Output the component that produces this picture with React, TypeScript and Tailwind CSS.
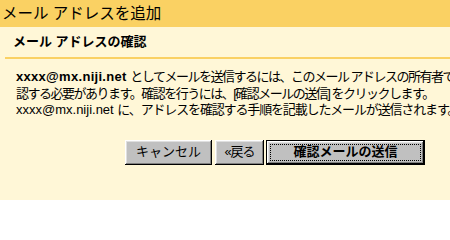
import React from 'react';

const bevel =
  'shadow-[inset_-1px_-1px_#000,inset_1px_1px_#fff,inset_-2px_-2px_#808080,inset_2px_2px_#dfdfdf]';

const App: React.FC = () => {
  return (
    <div className="w-[450px] h-[200px] overflow-hidden bg-[#fff7d7] text-black font-['Liberation_Sans','Noto_Sans_CJK_JP',sans-serif]">
      <div className="h-[27px] bg-[#fad163] pl-[2px] flex items-center text-[15.5px] whitespace-nowrap">
        メール アドレスを追加
      </div>
      <div className="h-[30px] pl-[13px] flex items-center text-[13px] font-bold whitespace-nowrap">
        メール アドレスの確認
      </div>
      <div className="ml-[5px] h-[2px] bg-[#fad163]" />

      <div className="pl-[16px] pt-[10px] text-[13px] leading-[16.5px] whitespace-nowrap">
        <p>
          <b className="tracking-[0.3px]">xxxx@mx.niji.net</b>{' '}
          <span className="tracking-[-1.5px]">としてメールを送信するには、このメール アドレスの所有者であることを確</span>
        </p>
        <p className="tracking-[-1.5px]">
          認する必要があります。確認を行うには、[確認メールの送信] をクリックします。
        </p>
        <p>
          xxxx@mx.niji.net{' '}
          <span className="tracking-[-1.15px]">に、アドレスを確認する手順を記載したメールが送信されます。</span>
        </p>
      </div>

      <div className="mt-[21px] pl-[125px] flex gap-[3px] text-[13px] whitespace-nowrap">
        <button className={`w-[87px] h-[25px] bg-[#c0c0c0] flex items-center justify-center ${bevel}`}>
          キャンセル
        </button>
        <button className={`w-[49px] h-[25px] bg-[#c0c0c0] flex items-center justify-center tracking-[-1px] ${bevel}`}>
          «戻る
        </button>
        <button className="w-[159px] h-[25px] -ml-[1px] border border-black bg-[#c0c0c0] p-0">
          <div className={`h-full w-full p-[3px] ${bevel}`}>
            <div className="h-full w-full border border-dotted border-black flex items-center justify-center font-bold">
              確認メールの送信
            </div>
          </div>
        </button>
      </div>
    </div>
  );
};

export default App;
